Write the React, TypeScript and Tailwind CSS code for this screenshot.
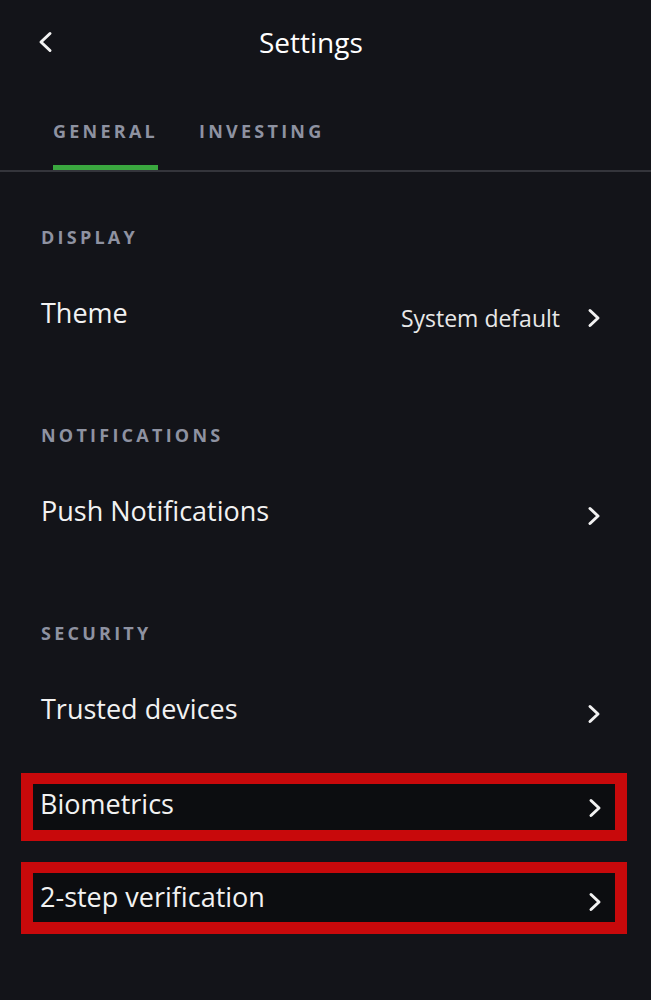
import React from 'react';

const font = { fontFamily: '"Open Sans", "Noto Sans", sans-serif' };

const ChevronRight = ({ className = '' }: { className?: string }) => (
  <svg className={className} width="16" height="20" viewBox="0 0 16 20" fill="none">
    <polyline points="4,2.5 12,10 4,17.5" stroke="#f2f2f2" strokeWidth="3" strokeLinecap="round" strokeLinejoin="round" />
  </svg>
);

const ChevronLeft = () => (
  <svg width="16" height="22" viewBox="0 0 16 22" fill="none">
    <polyline points="12,2.5 3,11 12,19.5" stroke="#f2f2f2" strokeWidth="3" strokeLinecap="round" strokeLinejoin="round" />
  </svg>
);

const SectionHeader = ({ title, className = '' }: { title: string; className?: string }) => (
  <div className={`pl-[41px] text-[18px] leading-[24px] font-bold tracking-[0.18em] text-[#8e92a1] ${className}`}>
    {title}
  </div>
);

const Row = ({ label, value }: { label: string; value?: string }) => (
  <div className="mt-[39px] flex h-[60px] items-center pl-[41px] pr-[49px]">
    <span className="mb-[10px] flex-1 text-[27px] leading-[34px] text-[#f2f2f2]">{label}</span>
    {value && <span className="mr-[26px] text-[23px] leading-[30px] text-[#e8e8e8]">{value}</span>}
    <ChevronRight />
  </div>
);

// red-outlined rows (highlighted in the screenshot)
const BoxedRow = ({ label, tall = false, className = '' }: { label: string; tall?: boolean; className?: string }) => (
  <div
    className={`ml-[21px] mr-[24px] border-x-[12px] border-t-[11px] border-[#c8090b] bg-[#0c0d10] ${
      tall ? 'border-b-[12px]' : 'border-b-[11px]'
    } ${className}`}
  >
    <div className={`flex items-center pl-[7px] pr-[12px] ${tall ? 'h-[49px]' : 'h-[46px]'}`}>
      <span className={`flex-1 text-[27px] leading-[34px] text-[#f2f2f2] ${tall ? 'mb-[2px]' : 'mb-[6px]'}`}>{label}</span>
      <ChevronRight className={tall ? 'mt-[8px]' : 'mt-[2px]'} />
    </div>
  </div>
);

export default function App() {
  return (
    <div className="min-h-[1000px] w-[651px] bg-[#131419]" style={font}>
      {/* Header */}
      <div className="flex h-[84px] items-center">
        <button className="ml-[38px] flex h-[24px] w-[16px] items-center justify-center">
          <ChevronLeft />
        </button>
        <div className="ml-[205px] text-[28px] leading-[36px] font-medium text-white">Settings</div>
      </div>

      {/* Tabs */}
      <div className="flex gap-[41px] border-b-2 border-[#34353b] pl-[53px] pt-[34px]">
        <div className="flex flex-col">
          <span className="text-[18px] leading-[26px] font-bold tracking-[0.18em] text-[#8e92a1]">GENERAL</span>
          <div className="mt-[21px] h-[5px] bg-[#3aa83f]" />
        </div>
        <div className="flex flex-col">
          <span className="text-[18px] leading-[26px] font-bold tracking-[0.18em] text-[#8e92a1]">INVESTING</span>
          <div className="mt-[21px] h-[5px]" />
        </div>
      </div>

      {/* Display */}
      <SectionHeader title="DISPLAY" className="mt-[53px]" />
      <Row label="Theme" value="System default" />

      {/* Notifications */}
      <SectionHeader title="NOTIFICATIONS" className="mt-[75px]" />
      <Row label="Push Notifications" />

      {/* Security */}
      <SectionHeader title="SECURITY" className="mt-[75px]" />
      <Row label="Trusted devices" />
      <BoxedRow label="Biometrics" className="mt-[29px]" />
      <BoxedRow label="2-step verification" tall className="mt-[21px]" />
    </div>
  );
}
